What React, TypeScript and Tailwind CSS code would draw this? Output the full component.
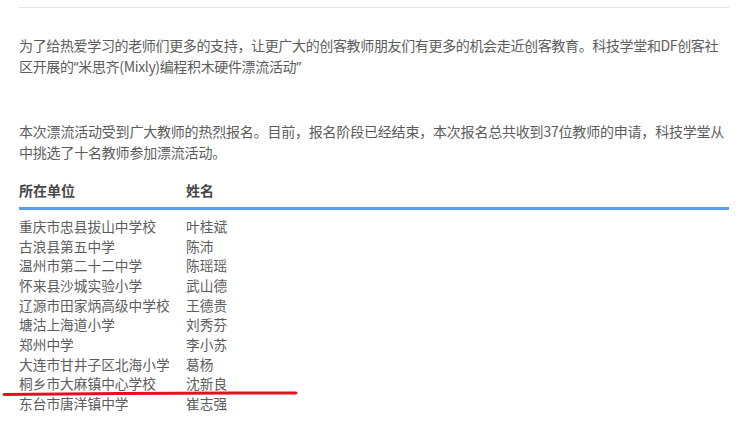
import React from 'react';

const rows: [string, string][] = [
  ['重庆市忠县拔山中学校', '叶桂斌'],
  ['古浪县第五中学', '陈沛'],
  ['温州市第二十二中学', '陈瑶瑶'],
  ['怀来县沙城实验小学', '武山德'],
  ['辽源市田家炳高级中学校', '王德贵'],
  ['塘沽上海道小学', '刘秀芬'],
  ['郑州中学', '李小苏'],
  ['大连市甘井子区北海小学', '葛杨'],
  ['桐乡市大麻镇中心学校', '沈新良'],
  ['东台市唐洋镇中学', '崔志强'],
];

export default function App() {
  return (
    <div className="relative w-[750px] h-[433px] overflow-hidden bg-white font-['Noto_Sans_CJK_SC','Noto_Sans',sans-serif] text-[#5c5c5c]">
      <div className="ml-[19px] mr-[21px] pt-[7px]">
        <div className="border-t border-[#e3e3e3]" />

        {/* intro */}
        <p className="mt-[27px] whitespace-nowrap text-[14px] leading-[21px] tracking-[-0.35px]">
          为了给热爱学习的老师们更多的支持，让更广大的创客教师朋友们有更多的机会走近创客教育。科技学堂和DF创客社
          <br />
          区开展的<span className="font-['Noto_Sans',sans-serif]">“</span>米思齐(Mixly)编程积木硬件漂流活动
          <span className="font-['Noto_Sans',sans-serif]">”</span>
        </p>

        <p className="mt-[44px] whitespace-nowrap text-[14px] leading-[21px] tracking-[-0.2px]">
          本次漂流活动受到广大教师的热烈报名。目前，报名阶段已经结束，本次报名总共收到37位教师的申请，科技学堂从
          <br />
          中挑选了十名教师参加漂流活动。
        </p>

        {/* table */}
        <div className="mt-[17px]">
          <div className="flex border-b-[3px] border-[#5e9cec] pb-[7px] text-[14px] leading-[20px] font-bold text-[#474747]">
            <div className="w-[167px]">所在单位</div>
            <div>姓名</div>
          </div>
          <div className="pt-[7px]">
            {rows.map(([school, name]) => (
              <div key={school} className="flex text-[13.7px] leading-[19.67px]">
                <div className="w-[167px] whitespace-nowrap">{school}</div>
                <div>{name}</div>
              </div>
            ))}
          </div>
        </div>
      </div>

      {/* hand-drawn red underline */}
      <svg className="absolute left-0 top-[387px]" width="300" height="14" viewBox="0 0 300 14">
        <path d="M4 7.5 Q 150 5.5 296 6" fill="none" stroke="#e3101f" strokeWidth="3" strokeLinecap="round" />
      </svg>
    </div>
  );
}
